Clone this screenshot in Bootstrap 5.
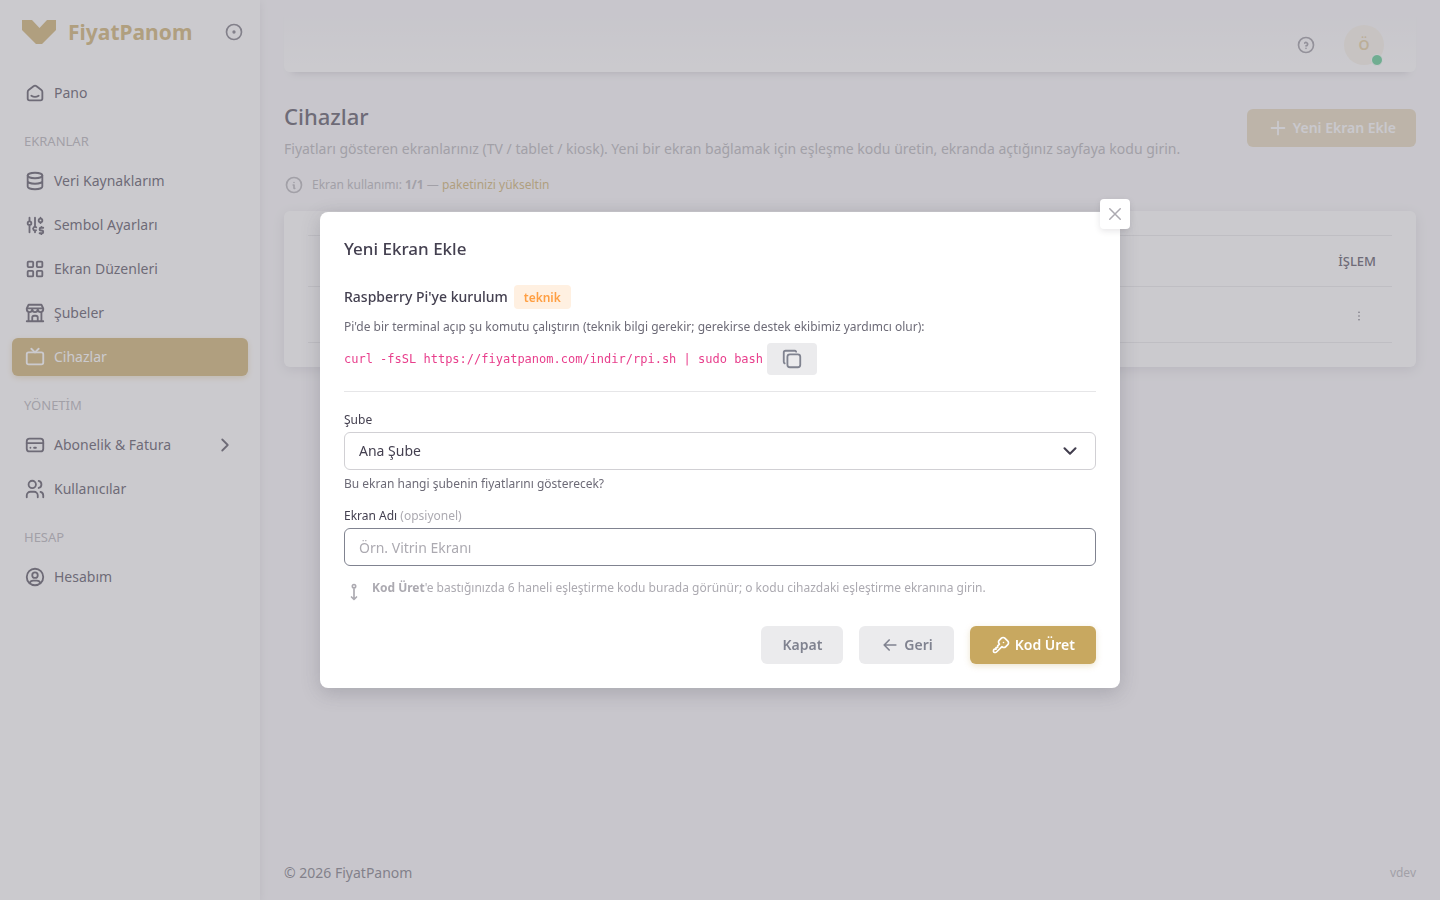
<!DOCTYPE html>
<html lang="tr">
<head>
<meta charset="utf-8">
<meta name="viewport" content="width=device-width, initial-scale=1">
<title>Cihazlar | FiyatPanom</title>
<link href="https://cdn.jsdelivr.net/npm/bootstrap@5.3.0/dist/css/bootstrap.min.css" rel="stylesheet">
<style>
:root{--gold:#c8a860;--heading:#444050;--text:#6d6b77;--soft:#acaab1;--line:#e6e6e8}
body{font-family:"Noto Sans","Open Sans",sans-serif;font-size:14px;line-height:22px;color:var(--text);background:#f8f7fa}
svg{fill:none;stroke:currentColor;stroke-width:2;stroke-linecap:round;stroke-linejoin:round;flex-shrink:0}
.i22{width:22px;height:22px}.i20{width:20px;height:20px}.i18{width:18px;height:18px}
.t12{font-size:12px;line-height:20px}
.text-soft{color:var(--soft)}
.text-gold{color:var(--gold)}
.side{width:260px;background:#fff;box-shadow:0 2px 8px rgba(47,43,61,.12)}
.brand{height:64px;padding:0 16px 0 22px}
.brand-name{font-size:21px;line-height:28px;font-weight:700;color:var(--gold)}
.side .nav{padding:10px 12px;gap:6px}
.side .nav-link{height:38px;padding:0 12px;color:var(--heading);gap:8px;border-radius:6px}
.side .nav-link.active{background:var(--gold);color:#fff;box-shadow:0 2px 6px rgba(200,168,96,.4)}
.nav-title{padding:13px 12px 5px;font-size:13px;line-height:20px;color:var(--soft)}
.main-col{padding:0 24px}
.topbar{height:72px;padding:18px 32px 0;gap:28px;border-radius:0 0 6px 6px;background:linear-gradient(#f8f7fa 16px,#fff);box-shadow:0 8px 8px -8px rgba(47,43,61,.28)}
.topbar>a{color:#8f8d97}
.topbar .avatar-o{width:40px;height:40px;background:#f6f1e6;color:#dfc793;font-weight:600}
.online{width:12px;height:12px;background:#48c585;border:2px solid #fff;border-width:1px;right:1px;bottom:-1px}
main{padding-top:25px}
h1{font-size:22px;line-height:38px;font-weight:500;color:var(--heading)}
.lead-line{line-height:20px}
.btn{font-size:14px;line-height:22px;font-weight:600;border:0;border-radius:6px;padding:8px 21px;height:38px}
.btn-gold,.btn-gold:hover{background:var(--gold);color:#fff;box-shadow:0 2px 6px rgba(200,168,96,.3)}
.btn-faded{opacity:.45;box-shadow:none;padding:8px 20px}
.btn-grey,.btn-grey:hover{background:#ebebed;color:#808390}
.panel{background:#fff;border-radius:6px;padding:24px;box-shadow:0 3px 12px rgba(47,43,61,.14)}
.panel .table{color:var(--heading);border-color:var(--line)}
.panel th,.panel td{padding:0 16px;vertical-align:middle;border-bottom:1px solid var(--line)}
.panel th{border-top:1px solid var(--line);height:51px;font-size:13px;font-weight:500}
.panel td{height:56px}
.modal-backdrop{--bs-backdrop-bg:#97959e;--bs-backdrop-opacity:.5}
.modal-dialog{max-width:800px}
.modal-content{border:0;border-radius:8px;padding:24px;box-shadow:0 5px 20px rgba(47,43,61,.2)}
.close-x{top:-13px;right:-10px;width:30px;height:30px;border:0;border-radius:4px;background:#fff;color:var(--soft);box-shadow:0 2px 6px rgba(47,43,61,.12)}
h2{font-size:17px;line-height:26px;font-weight:500;color:var(--heading)}
h3{font-size:14px;line-height:24px;font-weight:500;color:var(--heading)}
.setup-head{margin-top:23px;gap:6px}
.setup-text{margin:8px 0 6px}
.tag{font-size:12px;line-height:24px;height:24px;padding:1px 10px;font-weight:600;border-radius:4px;background:#fff0e1;color:#ff9f43}
code{font-family:"DejaVu Sans Mono",monospace;font-size:12px;color:#e83e8c}
.btn-copy{height:32px;padding:0 14px;border-radius:4px}
hr{margin:16px 0 18px;color:#d0cfd4;opacity:1;border-top:1px solid var(--line)}
.form-label{margin:0 0 2px;color:var(--heading)}
.form-control,.form-select{font-size:14px;line-height:22px;height:38px;padding:7px 14px;border:1px solid #d1d0d4;border-radius:6px;color:var(--heading)}
.form-select{background-image:url("data:image/svg+xml,%3Csvg xmlns='http://www.w3.org/2000/svg' viewBox='0 0 24 24' fill='none' stroke='%23444050' stroke-width='2.3' stroke-linecap='round' stroke-linejoin='round'%3E%3Cpath d='M6 9l6 6l6-6'/%3E%3C/svg%3E");background-size:22px;background-position:right 14px center}
.form-control.is-hover{border-color:#808390}
.form-control::placeholder{color:var(--soft)}
.help-line{margin:4px 0 12px}
.code-hint{margin-top:12px}
</style>
</head>
<body class="modal-open">
<div class="d-flex min-vh-100">
<aside class="side flex-shrink-0">
  <div class="brand d-flex align-items-center">
    <svg width="34" height="24" viewBox="0 0 34 24" style="fill:#c8a860;stroke:none"><path d="M0 0H10L17.500 8L25 0H34V10L20 24H14L0 10Z"/></svg>
    <span class="brand-name ms-2 ps-1">FiyatPanom</span>
    <a href="#" class="ms-auto d-flex text-reset" aria-label="Menü"><svg class="i20" viewBox="0 0 24 24"><circle cx="12" cy="12" r="9"/><circle cx="12" cy="12" r="1"/></svg></a>
  </div>
  <nav class="nav flex-column">
    <a class="nav-link d-flex align-items-center" href="#"><svg class="i22" viewBox="0 0 24 24"><path d="M19 8.710l-5.333-4.148a2.666 2.666 0 0 0-3.274 0l-5.334 4.148a2.665 2.665 0 0 0-1.029 2.105v7.200a2 2 0 0 0 2 2h12a2 2 0 0 0 2-2v-7.200c0-.823-.38-1.600-1.030-2.105M16 15c-2.210 1.333-5.792 1.333-8 0"/></svg>Pano</a>
    <div class="nav-title">EKRANLAR</div>
    <a class="nav-link d-flex align-items-center" href="#"><svg class="i22" viewBox="0 0 24 24"><ellipse cx="12" cy="6" rx="8" ry="3"/><path d="M4 6v6a8 3 0 0 0 16 0v-6M4 12v6a8 3 0 0 0 16 0v-6"/></svg>Veri Kaynaklarım</a>
    <a class="nav-link d-flex align-items-center" href="#"><svg class="i22" viewBox="0 0 24 24"><path d="M4 10a2 2 0 1 0 4 0a2 2 0 0 0-4 0M6 4v4M6 12v8M13.366 14.540a2 2 0 1 0-.216 3.097M12 4v10M12 18v2M16 7a2 2 0 1 0 4 0a2 2 0 0 0-4 0M18 4v1M18 9v1M21 15h-2.500a1.500 1.500 0 0 0 0 3h1a1.500 1.500 0 0 1 0 3h-2.500M19 21v1m0-8v1"/></svg>Sembol Ayarları</a>
    <a class="nav-link d-flex align-items-center" href="#"><svg class="i22" viewBox="0 0 24 24"><rect x="4" y="4" width="6" height="6" rx="1"/><rect x="14" y="4" width="6" height="6" rx="1"/><rect x="4" y="14" width="6" height="6" rx="1"/><rect x="14" y="14" width="6" height="6" rx="1"/></svg>Ekran Düzenleri</a>
    <a class="nav-link d-flex align-items-center" href="#"><svg class="i22" viewBox="0 0 24 24"><path d="M3 21h18M3 7v1a3 3 0 0 0 6 0v-1m0 1a3 3 0 0 0 6 0v-1m0 1a3 3 0 0 0 6 0v-1h-18l2-4h14l2 4M5 21v-10.150M19 21v-10.150M9 21v-4a2 2 0 0 1 2-2h2a2 2 0 0 1 2 2v4"/></svg>Şubeler</a>
    <a class="nav-link active d-flex align-items-center" href="#"><svg class="i22" viewBox="0 0 24 24"><rect x="3" y="7" width="18" height="13" rx="2"/><path d="M16 3l-4 4l-4-4"/></svg>Cihazlar</a>
    <div class="nav-title">YÖNETİM</div>
    <a class="nav-link d-flex align-items-center" href="#"><svg class="i22" viewBox="0 0 24 24"><rect x="3" y="5" width="18" height="14" rx="3"/><path d="M3 10h18M7 15h.010M11 15h2"/></svg>Abonelik &amp; Fatura<svg class="i22 ms-auto" viewBox="0 0 24 24"><path d="M9 6l6 6l-6 6"/></svg></a>
    <a class="nav-link d-flex align-items-center" href="#"><svg class="i22" viewBox="0 0 24 24"><circle cx="9" cy="7" r="4"/><path d="M3 21v-2a4 4 0 0 1 4-4h4a4 4 0 0 1 4 4v2M16 3.130a4 4 0 0 1 0 7.750M21 21v-2a4 4 0 0 0-3-3.850"/></svg>Kullanıcılar</a>
    <div class="nav-title">HESAP</div>
    <a class="nav-link d-flex align-items-center" href="#"><svg class="i22" viewBox="0 0 24 24"><circle cx="12" cy="12" r="9"/><circle cx="12" cy="10" r="3"/><path d="M6.168 18.849a4 4 0 0 1 3.832-2.849h4a4 4 0 0 1 3.834 2.855"/></svg>Hesabım</a>
  </nav>
</aside>
<div class="main-col flex-grow-1 d-flex flex-column">
  <header class="topbar d-flex align-items-center justify-content-end">
    <a href="#" class="d-flex" aria-label="Yardım"><svg class="i20" viewBox="0 0 24 24"><circle cx="12" cy="12" r="9"/><path d="M12 16v.010M12 13a2 2 0 0 0 .914-3.782a1.980 1.980 0 0 0-2.414.483"/></svg></a>
    <a href="#" class="avatar-o rounded-circle d-flex align-items-center justify-content-center position-relative text-decoration-none">Ö<span class="online rounded-circle position-absolute"></span></a>
  </header>
  <main class="flex-grow-1">
    <div class="d-flex justify-content-between align-items-center">
      <div><h1 class="m-0">Cihazlar</h1><p class="lead-line text-soft mb-0 pt-1">Fiyatları gösteren ekranlarınız (TV / tablet / kiosk). Yeni bir ekran bağlamak için eşleşme kodu üretin, ekranda açtığınız sayfaya kodu girin.</p></div>
      <button type="button" class="btn btn-gold btn-faded d-flex align-items-center gap-1 flex-shrink-0"><svg class="i22" viewBox="0 0 24 24"><path d="M12 5v14M5 12h14"/></svg>Yeni Ekran Ekle</button>
    </div>
    <div class="t12 text-soft d-flex align-items-center gap-2 mt-3 mb-3"><svg class="i20" viewBox="0 0 24 24"><circle cx="12" cy="12" r="9"/><path d="M12 9h.010M11 12h1v4h1"/></svg><span>Ekran kullanımı: <b>1/1</b> — <a href="#" class="text-gold text-decoration-none">paketinizi yükseltin</a></span></div>
    <div class="panel"><table class="table mb-0"><thead><tr><th></th><th class="text-end">İŞLEM</th></tr></thead><tbody><tr><td></td><td class="text-end"><svg class="i18 me-2" viewBox="0 0 24 24"><path d="M12 7h.010M12 12h.010M12 17h.010"/></svg></td></tr></tbody></table></div>
  </main>
  <footer class="d-flex justify-content-between align-items-center pb-3"><span>© 2026 FiyatPanom</span><span class="t12 text-soft">vdev</span></footer>
</div>
</div>
<div class="modal-backdrop show"></div>
<div class="modal show d-block" tabindex="-1" role="dialog" aria-labelledby="dlgTitle">
 <div class="modal-dialog modal-dialog-centered"><div class="modal-content">
  <button type="button" class="close-x position-absolute d-flex align-items-center justify-content-center p-0" aria-label="Kapat"><svg class="i18" viewBox="0 0 24 24"><path d="M5 5l14 14M19 5l-14 14"/></svg></button>
  <h2 id="dlgTitle" class="mb-0">Yeni Ekran Ekle</h2>
  <form>
   <div class="setup-head d-flex align-items-center"><h3 class="m-0">Raspberry Pi'ye kurulum</h3><span class="tag">teknik</span></div>
   <p class="setup-text t12">Pi'de bir terminal açıp şu komutu çalıştırın (teknik bilgi gerekir; gerekirse destek ekibimiz yardımcı olur):</p>
   <div class="d-flex align-items-center gap-1"><code>curl -fsSL https://fiyatpanom.com/indir/rpi.sh | sudo bash</code><button type="button" class="btn btn-grey btn-copy d-flex align-items-center" aria-label="Kopyala"><svg class="i22" viewBox="0 0 24 24"><path d="M7 9.667a2.667 2.667 0 0 1 2.667-2.667h8.666a2.667 2.667 0 0 1 2.667 2.667v8.666a2.667 2.667 0 0 1-2.667 2.667h-8.666a2.667 2.667 0 0 1-2.667-2.667zM4.012 16.737a2.005 2.005 0 0 1-1.012-1.737v-10c0-1.100.9-2 2-2h10c.75 0 1.158.385 1.500 1"/></svg></button></div>
   <hr>
   <label class="form-label t12 d-block" for="sube">Şube</label>
   <select class="form-select" id="sube"><option>Ana Şube</option></select>
   <div class="help-line t12">Bu ekran hangi şubenin fiyatlarını gösterecek?</div>
   <label class="form-label t12 d-block" for="ad">Ekran Adı <span class="text-soft">(opsiyonel)</span></label>
   <input class="form-control is-hover" id="ad" type="text" placeholder="Örn. Vitrin Ekranı">
   <div class="code-hint t12 text-soft d-flex gap-2"><svg class="i20 mt-1" viewBox="0 0 24 24"><path d="M12 7v14M9 18l3 3l3-3M12 7a2 2 0 1 0 0-4a2 2 0 0 0 0 4"/></svg><span><b>Kod Üret</b>'e bastığınızda 6 haneli eşleştirme kodu burada görünür; o kodu cihazdaki eşleştirme ekranına girin.</span></div>
   <div class="d-flex justify-content-end gap-3 mt-4">
    <button type="button" class="btn btn-grey">Kapat</button>
    <button type="button" class="btn btn-grey d-flex align-items-center gap-1"><svg class="i20" viewBox="0 0 24 24"><path d="M5 12h14M5 12l6 6M5 12l6-6"/></svg>Geri</button>
    <button type="submit" class="btn btn-gold d-flex align-items-center gap-1"><svg class="i20" viewBox="0 0 24 24"><path d="M16.555 3.843l3.602 3.602a2.877 2.877 0 0 1 0 4.069l-2.643 2.643a2.877 2.877 0 0 1-4.069 0l-.301-.301l-6.558 6.558a2 2 0 0 1-1.239.578l-.175.008h-1.172a1 1 0 0 1-.993-.883l-.007-.117v-1.172a2 2 0 0 1 .467-1.284l.119-.130l.414-.414h2v-2h2v-2l2.144-2.144l-.301-.301a2.877 2.877 0 0 1 0-4.069l2.643-2.643a2.877 2.877 0 0 1 4.069 0zM15 9h.010"/></svg>Kod Üret</button>
   </div>
  </form>
 </div></div>
</div>
<script src="https://cdn.jsdelivr.net/npm/bootstrap@5.3.0/dist/js/bootstrap.bundle.min.js"></script>
</body>
</html>
